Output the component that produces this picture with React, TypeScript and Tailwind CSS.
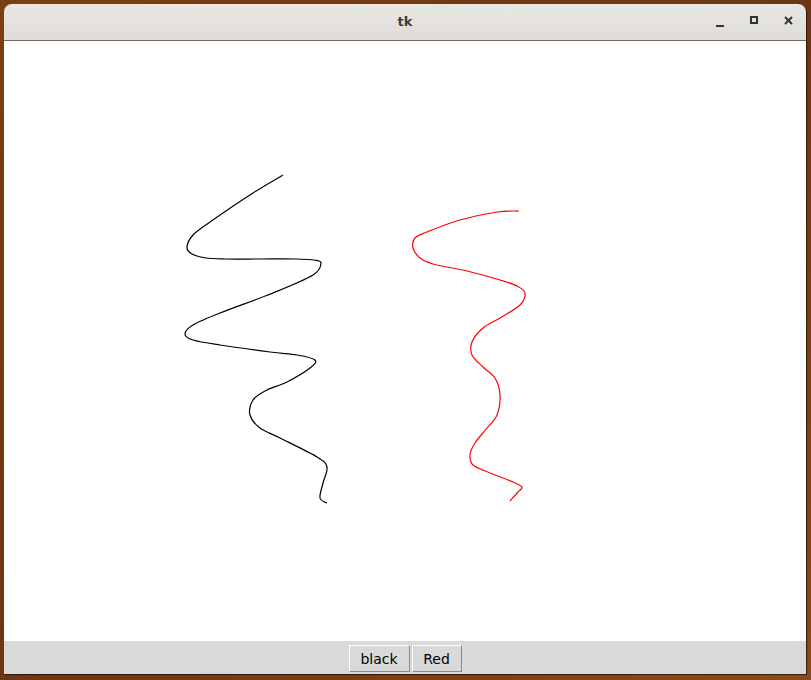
import React from 'react';

type Pt = [number, number];

// scribbles drawn on the canvas, in page coordinates
const blackLine: Pt[] = [
    [283, 175], [253, 193], [210, 222], [193, 235], [187, 247], [192, 254], [206, 258], [225, 259],
    [260, 259], [295, 259], [314, 260], [321, 263], [313, 275], [273, 293], [220, 313], [193, 325],
    [185, 334], [193, 340], [220, 345], [270, 352], [297, 355], [315, 360], [310, 368], [287, 382],
    [267, 390], [253, 400], [250, 415], [260, 428], [280, 438], [317, 457], [327, 467], [323, 483],
    [320, 498], [327, 503],
];

const redLine: Pt[] = [
    [519, 211], [497, 212], [460, 220], [427, 232], [415, 238], [413, 248], [420, 258], [433, 264],
    [467, 271], [500, 280], [517, 286], [525, 293], [520, 305], [500, 318], [483, 328], [472, 342],
    [472, 355], [483, 367], [495, 378], [500, 395], [497, 415], [487, 428], [475, 443], [470, 455],
    [473, 465], [490, 473], [513, 482], [522, 487], [518, 492], [510, 501],
];

// catmull-rom -> cubic bezier, offset so canvas top-left is 0,0
const toPath = (pts: Pt[], ox: number, oy: number) => {
    const p = pts.map(([x, y]) => [x - ox, y - oy] as Pt);
    let d = `M${p[0][0]},${p[0][1]}`;
    for (let i = 0; i < p.length - 1; i++) {
        const p0 = p[i - 1] || p[i];
        const p1 = p[i];
        const p2 = p[i + 1];
        const p3 = p[i + 2] || p2;
        const c1x = p1[0] + (p2[0] - p0[0]) / 6;
        const c1y = p1[1] + (p2[1] - p0[1]) / 6;
        const c2x = p2[0] - (p3[0] - p1[0]) / 6;
        const c2y = p2[1] - (p3[1] - p1[1]) / 6;
        d += ` C${c1x.toFixed(1)},${c1y.toFixed(1)} ${c2x.toFixed(1)},${c2y.toFixed(1)} ${p2[0]},${p2[1]}`;
    }
    return d;
};

const TkButton: React.FC<{ label: string; w: string }> = ({ label, w }) => (
    <button
        type="button"
        className={`${w} h-[27px] bg-[#d9d9d9] border border-t-white border-l-white border-r-[#8a8a8a] border-b-[#8a8a8a] text-[14px] text-black leading-none flex items-center justify-center`}
    >
        {label}
    </button>
);

const App: React.FC = () => {
    return (
        <div
            className="w-[811px] h-[680px] pt-[4px] pl-[4px] pr-[5px] pb-[6px] bg-gradient-to-br from-[#7a3f14] via-[#6c3612] to-[#8a4a1c]"
            style={{ fontFamily: '"DejaVu Sans", "Noto Sans", sans-serif' }}
        >
            <div className="w-full h-full flex flex-col rounded-t-[8px] overflow-hidden shadow-[1px_1px_1px_rgba(0,0,0,0.6)]">
                {/* title bar */}
                <div className="h-[37px] shrink-0 bg-gradient-to-b from-[#e9e7e4] to-[#dfdcd8] border-b border-[#6f6a64] flex items-center relative">
                    <div className="flex-1 text-center text-[13px] font-bold text-[#3d3d3d]">tk</div>
                    <div className="absolute right-[13px] top-0 h-full flex items-center gap-[26px]">
                        <div className="w-[8px] h-[9px] flex items-end">
                            <div className="w-[8px] h-[2px] bg-[#2e3436]" />
                        </div>
                        <div className="w-[8px] h-[8px] border-2 border-[#2e3436] -mt-[4px]" />
                        <svg width="9" height="9" viewBox="0 0 9 9" className="-mt-[3px]">
                            <path d="M1 1 L8 8 M8 1 L1 8" stroke="#2e3436" strokeWidth="2" />
                        </svg>
                    </div>
                </div>

                {/* canvas */}
                <div className="h-[600px] shrink-0 bg-white relative">
                    <svg width="801" height="600" className="absolute left-0 top-0">
                        <path d={toPath(blackLine, 4, 41)} fill="none" stroke="#000" strokeWidth="1.2" />
                        <path d={toPath(redLine, 4, 41)} fill="none" stroke="#ff0000" strokeWidth="1.2" />
                    </svg>
                </div>

                {/* button strip */}
                <div className="flex-1 bg-[#d9d9d9] flex items-start justify-center gap-[2px] pt-[4px]">
                    <TkButton label="black" w="w-[61px]" />
                    <TkButton label="Red" w="w-[50px]" />
                </div>
            </div>
        </div>
    );
};

export default App;
